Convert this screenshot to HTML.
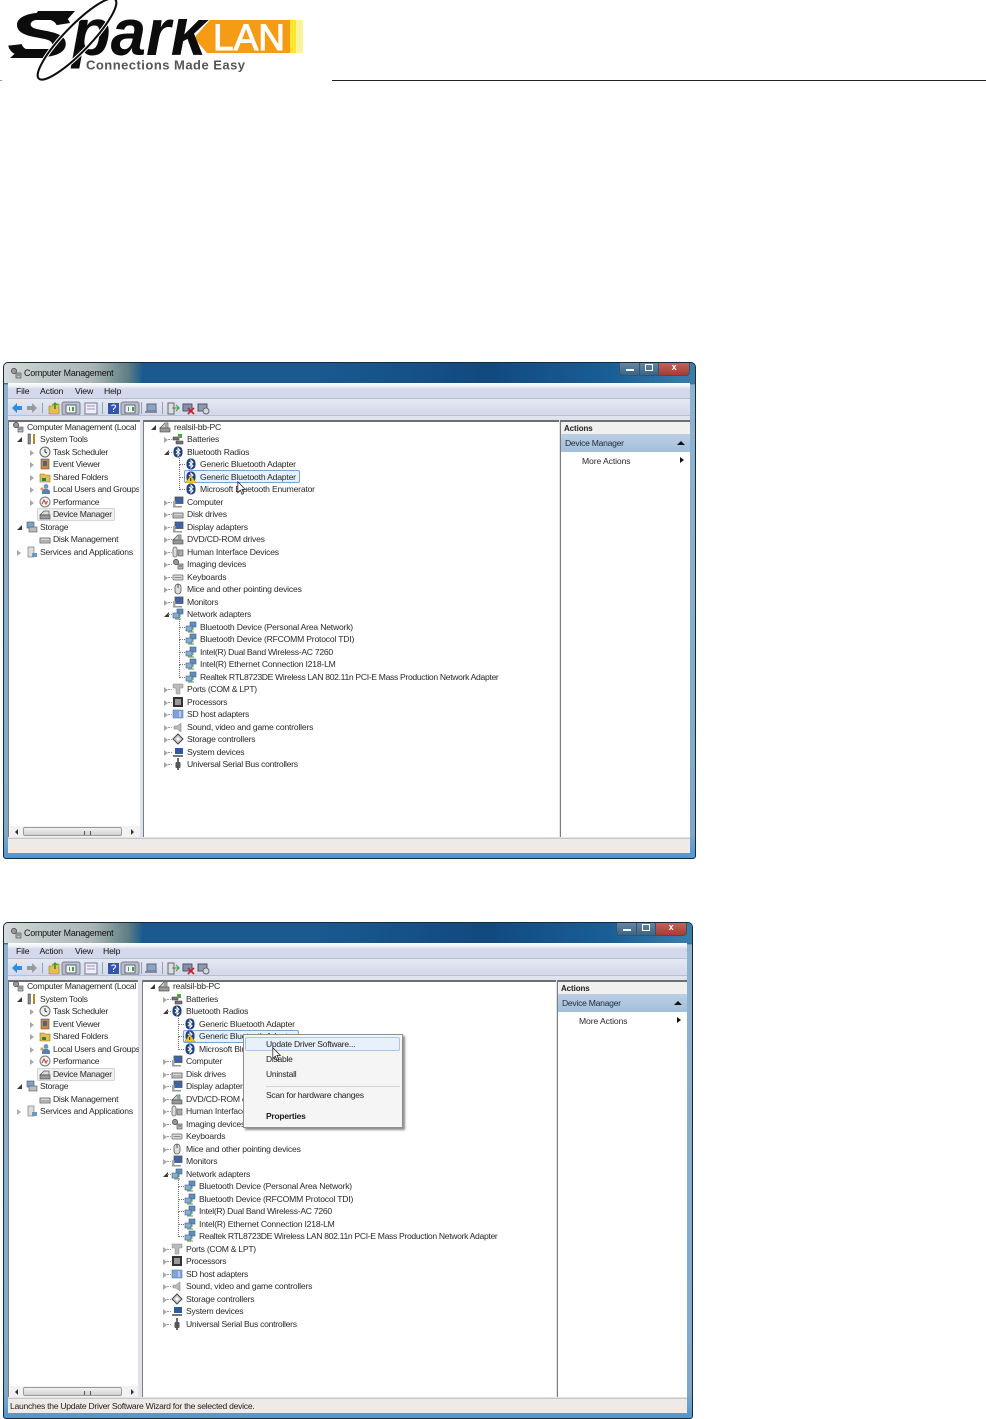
<!DOCTYPE html>
<html><head><meta charset="utf-8">
<style>
html,body{margin:0;padding:0;background:#fff}
body{width:986px;height:1419px;position:relative;overflow:hidden;font-family:"Liberation Sans",sans-serif}
.win{position:absolute;left:3px;height:497px;border:1px solid #1b2a38;box-sizing:border-box;border-radius:5px 5px 3px 3px;background:linear-gradient(180deg,#16568c 0,#1a5a90 20px,#8fb3cf 22px,#7fa8c8 470px,#4f97cf 100%);font-size:8.6px;letter-spacing:-.2px;color:#2a2a2a;overflow:hidden}
.blur{position:absolute;left:-1px;top:-1px;right:-1px;bottom:-1px;filter:blur(.3px)}
.tb{position:absolute;left:0;top:0;right:0;height:21px;background:linear-gradient(90deg,#d8dde0 0,#c8d0d0 20px,#aab6b6 90px,#5f7f85 125px,#1a5a90 140px,#1a5a90 45%,#12497f 70%,#1a5f96 88%,#3c7ea9 100%)}
.tt{position:absolute;left:21px;top:5px;font-size:8.9px;letter-spacing:-.2px;color:#111;line-height:12px}
.bts{position:absolute;top:-1px;height:14px;display:flex;border:1px solid #37526c;border-top:0;border-radius:0 0 4px 4px;overflow:hidden}
.bts i{display:block;height:14px;position:relative;box-sizing:border-box}
.menu{position:absolute;left:5px;top:21px;height:15px;background:linear-gradient(180deg,#fff 0,#eef1f8 20%,#d3d9ea 40%,#d3d9ea 100%);border-bottom:1px solid #b6bdd0}
.menu span{position:absolute;top:3px;line-height:11px;font-size:8.7px;letter-spacing:-.15px;color:#111}
.tool{position:absolute;left:5px;top:37px;height:16px;background:linear-gradient(180deg,#e4e8f3,#d3d9ea);border-bottom:1px solid #b9c0d2}
.mid{position:absolute;left:5px;top:54px;background:#dfe3ee;height:422px}
.pane{position:absolute;top:4px;background:#fff;border-top:2px solid #6f6f6f;border-left:1px solid #7b7b7b;box-sizing:border-box;bottom:1px}
.st{position:absolute;left:5px;top:476px;height:15px;background:#eeeae8;border-top:1px solid #c9c6c4;box-sizing:border-box;font-size:8.6px;letter-spacing:-.28px;line-height:15px;color:#222;padding-left:2px}
.tree{position:absolute;white-space:nowrap}
.r{position:relative;height:12.5px;line-height:12.5px}
.r svg{position:absolute;width:12px;height:12px;top:0}
.t0{padding-left:24px}.t0 svg{left:9px}.t0 b{left:1px}
.t1{padding-left:37px}.t1 svg{left:22px}.t1 b{left:14px}
.t2{padding-left:50px}.t2 svg{left:35px}.t2 b{left:27px}
.o,.e{position:absolute;top:4px;width:0;height:0}
.o{border-left:4px solid #a8a8a8;border-top:3px solid transparent;border-bottom:3px solid transparent}
.e{border-right:5px solid #3a3a3a;border-top:5px solid transparent;margin-top:0}
.d::before{content:"";position:absolute;left:29px;top:-6px;height:12px;width:5px;border-left:1px dotted #777;border-bottom:1px dotted #777}
.s1::after{content:"";position:absolute;left:18px;top:6px;width:4px;border-top:1px dotted #999}
.sel{position:absolute;box-sizing:border-box;height:13px;border-radius:2px}
.act{position:absolute;left:0;right:0;top:0;height:12px;background:#f0f0f0;font-weight:bold;font-size:8px;letter-spacing:-.1px;line-height:13px;padding-left:3px;color:#222}
.dm{position:absolute;left:0;right:0;top:12px;height:18px;background:linear-gradient(180deg,#b9cfe4,#a3bfdb);line-height:19px;padding-left:4px;letter-spacing:-.28px;color:#1d2b3a}
.ma{position:absolute;left:21px;top:33px;line-height:12px;letter-spacing:-.1px}
.sb{position:absolute;height:11px;background:#f2f2f2}
.sb i{position:absolute;left:13px;top:1px;height:9px;width:99px;background:linear-gradient(180deg,#f2f2f2,#cfd0d0);border:1px solid #9a9a9a;border-radius:2px;box-sizing:border-box}
.sb u{position:absolute;top:3px;width:0;height:0;border-top:3px solid transparent;border-bottom:3px solid transparent}
.sb em{position:absolute;left:60px;top:3px;width:5px;height:4px;border-left:1px solid #555;border-right:1px solid #555}
.ctx{position:absolute;left:240px;top:112px;width:160px;height:94px;background:#f5f5f5;border:1px solid #8f8f8f;box-sizing:border-box;box-shadow:2px 2px 2px rgba(0,0,0,.45);font-size:8.5px;letter-spacing:-.25px;color:#222}
.ctx span{position:absolute;left:22px;line-height:12px;white-space:nowrap}
.rt{letter-spacing:-.33px}
.nr{letter-spacing:-.27px}
</style></head><body>

<svg width="0" height="0" style="position:absolute">
<defs>
<symbol id="bt" viewBox="0 0 12 12"><rect x="1.5" y=".5" width="9" height="11" rx="4.2" fill="#1d3f78"/><path d="M3.8 3.8L8 7.8 6 9.8V2.2L8 4.2 3.8 8.2" fill="none" stroke="#fff" stroke-width="1"/></symbol>
<symbol id="bw" viewBox="0 0 12 12"><rect x="1.5" y=".5" width="9" height="11" rx="4.2" fill="#1d3f78"/><path d="M3.8 3.8L8 7.8 6 9.8V2.2L8 4.2 3.8 8.2" fill="none" stroke="#fff" stroke-width="1"/><path d="M5.500 4.500L11.500 12H.5z" fill="#f5c829" stroke="#8a6a10" stroke-width=".4"/><rect x="5.200" y="7" width="1" height="3" fill="#222"/></symbol>
<symbol id="net" viewBox="0 0 12 12"><rect x="5" y="1" width="6" height="5" fill="#5f8fc0" stroke="#44617f" stroke-width=".6"/><rect x="1" y="5" width="6" height="5" fill="#86aed2" stroke="#44617f" stroke-width=".6"/><path d="M3 11H9M8 6V9" stroke="#5a9a50"/></symbol>
<symbol id="mon" viewBox="0 0 12 12"><rect x="3" y="1" width="8" height="6.5" fill="#3f62a8" stroke="#555" stroke-width=".8"/><path d="M1 10h9v1.500H1z" fill="#999"/><rect x="1" y="5" width="2.500" height="5" fill="#aaa"/></symbol>
<symbol id="disk" viewBox="0 0 12 12"><path d="M1 5h10v5H1z" fill="#d8d8d8" stroke="#555" stroke-width=".8"/><path d="M2 8h8" stroke="#888"/></symbol>
<symbol id="srv" viewBox="0 0 12 12"><path d="M1 7L6 2h3v5H1z" fill="#ccc" stroke="#555" stroke-width=".7"/><rect x="1" y="7" width="10" height="4" fill="#999" stroke="#444" stroke-width=".6"/><path d="M7 3v3" stroke="#3f8f50"/></symbol>
<symbol id="gear" viewBox="0 0 12 12"><circle cx="4" cy="4" r="2.6" fill="#999" stroke="#444" stroke-width=".7"/><rect x="6" y="6" width="5" height="5" fill="#bbb" stroke="#444" stroke-width=".6"/><path d="M7 8h3" stroke="#3a6fb0"/></symbol>
<symbol id="bat" viewBox="0 0 12 12"><path d="M1 4h6v3H1zM4 8h7v3H4z" fill="#777" stroke="#333" stroke-width=".5"/><path d="M6 1h4v4H6z" fill="#54a34a"/></symbol>
<symbol id="tool" viewBox="0 0 12 12"><rect x="2" y="1" width="2.500" height="10" fill="#888" stroke="#444" stroke-width=".5"/><path d="M8 1v10" stroke="#b28a2a" stroke-width="2"/></symbol>
<symbol id="clk" viewBox="0 0 12 12"><circle cx="6" cy="6" r="5" fill="#eee" stroke="#666"/><path d="M6 3v3l2 1" stroke="#333" fill="none"/></symbol>
<symbol id="ev" viewBox="0 0 12 12"><rect x="2" y="1" width="8" height="10" fill="#c98b3a" stroke="#555" stroke-width=".6"/><rect x="4" y="3" width="4" height="5" fill="#3f62a8"/></symbol>
<symbol id="fold" viewBox="0 0 12 12"><path d="M1 3h4l1 1h5v7H1z" fill="#e2bf50" stroke="#8a6f1a" stroke-width=".6"/><path d="M3 7h4v3H3z" fill="#3a7a3a"/></symbol>
<symbol id="usr" viewBox="0 0 12 12"><circle cx="7" cy="3.500" r="2.400" fill="#6f95c4"/><path d="M3 11V8l2-2h4l2 2v3z" fill="#5a7fb0"/><circle cx="3" cy="6" r="1.600" fill="#c9a24a"/></symbol>
<symbol id="perf" viewBox="0 0 12 12"><circle cx="6" cy="6" r="5" fill="#f4f4f4" stroke="#777"/><path d="M3 8L5 4l2 4 1.500-3" fill="none" stroke="#c0392b"/></symbol>
<symbol id="dev" viewBox="0 0 12 12"><path d="M1 7L5 3h5v4z" fill="#ddd" stroke="#555" stroke-width=".7"/><rect x="1" y="7" width="10" height="4" fill="#999" stroke="#444" stroke-width=".6"/></symbol>
<symbol id="sto" viewBox="0 0 12 12"><rect x="1" y="1" width="7" height="6" fill="#7fa0c8" stroke="#456" stroke-width=".6"/><rect x="3" y="6" width="8" height="5" fill="#bbb" stroke="#555" stroke-width=".6"/></symbol>
<symbol id="svc" viewBox="0 0 12 12"><rect x="2" y="1" width="6" height="10" fill="#ddd" stroke="#667" stroke-width=".6"/><rect x="6" y="7" width="5" height="4" fill="#6f95c4"/></symbol>
<symbol id="hid" viewBox="0 0 12 12"><rect x="1" y="1" width="4" height="10" rx="2" fill="#ddd" stroke="#555" stroke-width=".7"/><rect x="6" y="4" width="5" height="6" fill="#aaa" stroke="#555" stroke-width=".6"/></symbol>
<symbol id="kb" viewBox="0 0 12 12"><rect x="1" y="4" width="10" height="5" rx="1" fill="#ddd" stroke="#666" stroke-width=".7"/><path d="M2.500 6.500h7" stroke="#888"/></symbol>
<symbol id="ms" viewBox="0 0 12 12"><rect x="3" y="1" width="6" height="10" rx="3" fill="#ddd" stroke="#555" stroke-width=".8"/><path d="M6 1v4" stroke="#555"/></symbol>
<symbol id="prt" viewBox="0 0 12 12"><path d="M1 1h10v4H8v6H4V5H1z" fill="#bbb" stroke="#888" stroke-width=".5"/></symbol>
<symbol id="cpu" viewBox="0 0 12 12"><rect x="1" y="1" width="10" height="10" fill="#333"/><rect x="3" y="3" width="6" height="6" fill="#999"/></symbol>
<symbol id="sd" viewBox="0 0 12 12"><rect x="1" y="2" width="10" height="8" fill="#7fa3d6" stroke="#5a7fb0" stroke-width=".6"/><path d="M8 3v6" stroke="#eef"/></symbol>
<symbol id="snd" viewBox="0 0 12 12"><path d="M2 5h3l4-3v9L5 8H2z" fill="#bbb" stroke="#777" stroke-width=".5"/></symbol>
<symbol id="stc" viewBox="0 0 12 12"><path d="M6 1l5 5-5 5-5-5z" fill="#ccc" stroke="#444"/><circle cx="6" cy="6" r="1.500" fill="#fff"/></symbol>
<symbol id="sys" viewBox="0 0 12 12"><rect x="3" y="2" width="8" height="6" fill="#2f5aa8"/><path d="M1 10h10" stroke="#777" stroke-width="2"/></symbol>
<symbol id="usb" viewBox="0 0 12 12"><rect x="3.500" y="4" width="5" height="6" rx="1" fill="#555"/><path d="M6 0v4M6 10v2" stroke="#444" stroke-width="1.600"/></symbol>
<symbol id="cur" viewBox="0 0 12 18"><path d="M1 1v13l3-3 2 5 2-1-2-5h4z" fill="#fff" stroke="#222" stroke-width=".9"/></symbol>
<symbol id="tbar" viewBox="0 0 215 14">
<path d="M13 7l5-5v3h5v4H18v3z" fill="#2f8fd6"/><path d="M28 5h5V2l5 5-5 5V9h-5z" fill="#9a9a9a"/><rect x="43" y="2" width="1" height="10" fill="#98a0b0"/>
<path d="M50 5h3l1-2h6v10H50z" fill="#e6c04a" stroke="#9c7c1e" stroke-width=".6"/><path d="M56 1l3 3h-2v4h-2V4h-2z" fill="#4a9a3a"/>
<rect x="63" y="1" width="18" height="13" rx="2" fill="#b7bcc9" stroke="#79808f"/><rect x="67" y="4" width="10" height="8" fill="#eef" stroke="#667"/><path d="M70 6h1v4h-1zM73 6h2v4h-2z" fill="#4a9a3a"/>
<rect x="86" y="2" width="12" height="11" fill="#eef" stroke="#778"/><path d="M88 5h8M88 8h8" stroke="#99a"/><rect x="103" y="1" width="1" height="12" fill="#98a0b0"/>
<rect x="109" y="2" width="11" height="11" fill="#3556a8"/><path d="M112.500 5c1-2 5-1 4 1l-2 2v1M114.500 10v1" stroke="#fff" fill="none"/>
<rect x="122" y="1" width="18" height="13" rx="2" fill="#b7bcc9" stroke="#79808f"/><rect x="126" y="4" width="10" height="8" fill="#eef" stroke="#667"/><path d="M129 6h1v4h-1zM133 6h2v4h-2z" fill="#4a9a3a"/><rect x="142" y="1" width="1" height="12" fill="#98a0b0"/>
<rect x="148" y="3" width="9" height="7" fill="#86a3c8" stroke="#667"/><path d="M146 11h12" stroke="#889" stroke-width="2"/><rect x="163" y="1" width="1" height="12" fill="#98a0b0"/>
<rect x="169" y="2" width="6" height="11" fill="#ddd" stroke="#667"/><path d="M173 7h7M177 4l3 3-3 3" stroke="#3a9a3a" fill="none"/>
<rect x="184" y="3" width="9" height="7" fill="#7f93b0" stroke="#556"/><path d="M189 7l6 6M195 7l-6 6" stroke="#d0202a" stroke-width="1.600"/>
<rect x="199" y="3" width="9" height="7" fill="#8d9aac" stroke="#556"/><circle cx="207" cy="10" r="3" fill="#d8d8d8" stroke="#667"/>
</symbol>
</defs>
</svg>

<!-- logo -->
<svg style="position:absolute;left:0;top:0" width="320" height="82" viewBox="0 0 320 82">
<defs><clipPath id="kc"><rect x="60" y="19" width="160" height="60"/></clipPath></defs>
<polygon points="210,20 290,20 290,53 207,53 194,38" fill="#f59b14"/>
<rect x="290" y="20" width="6" height="33" fill="#fde62f"/>
<rect x="296" y="20" width="7" height="33" fill="#f9f49c"/>
<text x="213" y="50" font-size="37" textLength="72" lengthAdjust="spacingAndGlyphs" fill="#fff" stroke="#fff" stroke-width="1" font-family="Liberation Sans">LAN</text>
<text transform="translate(7,57) scale(1.5,.98)" font-size="64" font-weight="bold" font-style="italic" fill="#0c0c0c" font-family="Liberation Sans">S</text>
<polygon points="38,11 75,11 67,20 32,20" fill="#0c0c0c"/>
<polygon points="10,58 46,58 53,49 20,49" fill="#0c0c0c"/>
<g clip-path="url(#kc)"><text x="72" y="55" font-size="66" font-weight="bold" font-style="italic" fill="#0c0c0c" textLength="134" lengthAdjust="spacingAndGlyphs" font-family="Liberation Sans">park</text></g>
<ellipse cx="77" cy="39" rx="55" ry="13" transform="rotate(-46 77 39)" fill="none" stroke="#fff" stroke-width="4"/>
<ellipse cx="77" cy="39" rx="55" ry="13" transform="rotate(-46 77 39)" fill="none" stroke="#0c0c0c" stroke-width="2"/>
<text x="86" y="69.500" font-size="13" font-weight="bold" fill="#555" textLength="159" font-family="Liberation Sans">Connections Made Easy</text>
</svg>
<div style="position:absolute;left:332px;top:80px;width:654px;height:1px;background:#222"></div>
<div style="position:absolute;left:0;top:80px;width:2px;height:1px;background:#999"></div>

<!-- WINDOW 1 -->
<div class="win" style="top:362px;width:693px">
<div class="blur">
<div class="tb"></div>
<svg style="position:absolute;left:7px;top:5px;width:12px;height:12px"><use href="#gear"/></svg>
<div class="tt">Computer Management</div>
<div class="bts" style="left:616px">
<i style="width:19px;background:linear-gradient(#6d8ca8,#3d6484)"><s style="position:absolute;left:6px;top:8px;width:8px;height:2px;background:#fff"></s></i>
<i style="width:19px;background:linear-gradient(#6d8ca8,#3d6484);border-left:1px solid #37526c"><s style="position:absolute;left:5px;top:3px;width:8px;height:7px;border:1px solid #fff;box-sizing:border-box"></s></i>
<i style="width:31px;background:linear-gradient(#c9695e,#a63d33);border-left:1px solid #37526c;color:#fff;font:bold 9px/13px 'Liberation Sans';text-align:center">x</i>
</div>
<div class="menu" style="width:682px"><span style="left:8px">File</span><span style="left:32px">Action</span><span style="left:67px">View</span><span style="left:96px">Help</span></div>
<div class="tool" style="width:682px"><svg style="position:absolute;left:-9px;top:2px" width="215" height="14"><use href="#tbar"/></svg></div>
<div class="mid" style="width:682px">
<div class="pane" style="left:0;width:132px"></div>
<div class="pane" style="left:135px;width:416px"></div>
<div class="pane" style="left:552px;width:130px">
<div class="act">Actions</div>
<div class="dm">Device Manager<s style="position:absolute;right:5px;top:7px;width:0;height:0;border-left:4px solid transparent;border-right:4px solid transparent;border-bottom:4px solid #111"></s></div>
<div class="ma">More Actions</div>
<s style="position:absolute;left:119px;top:35px;width:0;height:0;border-left:4px solid #111;border-top:3px solid transparent;border-bottom:3px solid transparent"></s>
</div>
</div>
<div class="sel" style="left:34px;top:146px;width:78px;background:#f0f0f0;border:1px solid #d4d4d4"></div>
<div class="sel" style="left:181px;top:108px;width:116px;background:#e6f1fb;border:1px solid #7da2ce"></div>

<!-- left tree -->
<div class="tree nr" style="left:0;top:58.500px;width:136px;overflow:hidden">
<div class="r t0"><svg><use href="#gear"/></svg>Computer Management (Local</div>
<div class="r t1"><b class="e"></b><svg style="left:23px"><use href="#tool"/></svg>System Tools</div>
<div class="r t2"><b class="o"></b><svg style="left:36px"><use href="#clk"/></svg>Task Scheduler</div>
<div class="r t2"><b class="o"></b><svg style="left:36px"><use href="#ev"/></svg>Event Viewer</div>
<div class="r t2"><b class="o"></b><svg style="left:36px"><use href="#fold"/></svg>Shared Folders</div>
<div class="r t2"><b class="o"></b><svg style="left:36px"><use href="#usr"/></svg>Local Users and Groups</div>
<div class="r t2"><b class="o"></b><svg style="left:36px"><use href="#perf"/></svg>Performance</div>
<div class="r t2"><svg style="left:36px"><use href="#dev"/></svg>Device Manager</div>
<div class="r t1"><b class="e"></b><svg style="left:23px"><use href="#sto"/></svg>Storage</div>
<div class="r t2"><svg style="left:36px"><use href="#disk"/></svg>Disk Management</div>
<div class="r t1" style="letter-spacing:-.2px"><b class="o"></b><svg style="left:23px"><use href="#svc"/></svg>Services and Applications</div>
</div>

<!-- right tree -->
<div class="tree" style="left:147px;top:58.500px">
<div class="r t0"><b class="e"></b><svg><use href="#srv"/></svg>realsil-bb-PC</div>
<div class="r t1 s1"><b class="o"></b><svg><use href="#bat"/></svg>Batteries</div>
<div class="r t1 s1"><b class="e"></b><svg><use href="#bt"/></svg>Bluetooth Radios</div>
<div class="r t2 d"><svg><use href="#bt"/></svg>Generic Bluetooth Adapter</div>
<div class="r t2 d"><svg><use href="#bw"/></svg>Generic Bluetooth Adapter</div>
<div class="r t2 d"><svg><use href="#bt"/></svg>Microsoft Bluetooth Enumerator</div>
<div class="r t1 s1"><b class="o"></b><svg><use href="#mon"/></svg>Computer</div>
<div class="r t1 s1"><b class="o"></b><svg><use href="#disk"/></svg>Disk drives</div>
<div class="r t1 s1"><b class="o"></b><svg><use href="#mon"/></svg>Display adapters</div>
<div class="r t1 s1"><b class="o"></b><svg><use href="#srv"/></svg>DVD/CD-ROM drives</div>
<div class="r t1 s1"><b class="o"></b><svg><use href="#hid"/></svg>Human Interface Devices</div>
<div class="r t1 s1"><b class="o"></b><svg><use href="#gear"/></svg>Imaging devices</div>
<div class="r t1 s1"><b class="o"></b><svg><use href="#kb"/></svg>Keyboards</div>
<div class="r t1 s1"><b class="o"></b><svg><use href="#ms"/></svg>Mice and other pointing devices</div>
<div class="r t1 s1"><b class="o"></b><svg><use href="#mon"/></svg>Monitors</div>
<div class="r t1 s1"><b class="e"></b><svg><use href="#net"/></svg>Network adapters</div>
<div class="r t2 d"><svg><use href="#net"/></svg>Bluetooth Device (Personal Area Network)</div>
<div class="r t2 d"><svg><use href="#net"/></svg>Bluetooth Device (RFCOMM Protocol TDI)</div>
<div class="r t2 d nr"><svg><use href="#net"/></svg>Intel(R) Dual Band Wireless-AC 7260</div>
<div class="r t2 d"><svg><use href="#net"/></svg>Intel(R) Ethernet Connection I218-LM</div>
<div class="r t2 d rt"><svg><use href="#net"/></svg>Realtek RTL8723DE Wireless LAN 802.11n PCI-E Mass Production Network Adapter</div>
<div class="r t1 s1 nr"><b class="o"></b><svg><use href="#prt"/></svg>Ports (COM &amp; LPT)</div>
<div class="r t1 s1 nr"><b class="o"></b><svg><use href="#cpu"/></svg>Processors</div>
<div class="r t1 s1 nr"><b class="o"></b><svg><use href="#sd"/></svg>SD host adapters</div>
<div class="r t1 s1"><b class="o"></b><svg><use href="#snd"/></svg>Sound, video and game controllers</div>
<div class="r t1 s1"><b class="o"></b><svg><use href="#stc"/></svg>Storage controllers</div>
<div class="r t1 s1"><b class="o"></b><svg><use href="#sys"/></svg>System devices</div>
<div class="r t1 s1 nr"><b class="o"></b><svg><use href="#usb"/></svg>Universal Serial Bus controllers</div>
</div>
<svg style="position:absolute;left:234px;top:119px" width="10" height="15" viewBox="0 0 12 18"><use href="#cur"/></svg>
<div class="sb" style="left:7px;width:130px;top:464px"><u style="left:5px;border-right:3px solid #333"></u><i><em></em></i><u style="left:121px;border-left:3px solid #333"></u></div>
<div class="st" style="width:682px"></div>
</div>
</div>

<!-- WINDOW 2 -->
<div class="win" style="top:922px;width:690px">
<div class="blur">
<div class="tb"></div>
<svg style="position:absolute;left:7px;top:5px;width:12px;height:12px"><use href="#gear"/></svg>
<div class="tt">Computer Management</div>
<div class="bts" style="left:613px">
<i style="width:19px;background:linear-gradient(#6d8ca8,#3d6484)"><s style="position:absolute;left:6px;top:8px;width:8px;height:2px;background:#fff"></s></i>
<i style="width:19px;background:linear-gradient(#6d8ca8,#3d6484);border-left:1px solid #37526c"><s style="position:absolute;left:5px;top:3px;width:8px;height:7px;border:1px solid #fff;box-sizing:border-box"></s></i>
<i style="width:31px;background:linear-gradient(#c9695e,#a63d33);border-left:1px solid #37526c;color:#fff;font:bold 9px/13px 'Liberation Sans';text-align:center">x</i>
</div>
<div class="menu" style="width:679px"><span style="left:8px">File</span><span style="left:31.500px">Action</span><span style="left:67px">View</span><span style="left:95px">Help</span></div>
<div class="tool" style="width:679px"><svg style="position:absolute;left:-9px;top:2px" width="215" height="14"><use href="#tbar"/></svg></div>
<div class="mid" style="width:679px">
<div class="pane" style="left:0;width:130px"></div>
<div class="pane" style="left:134px;width:414px"></div>
<div class="pane" style="left:549px;width:130px">
<div class="act">Actions</div>
<div class="dm">Device Manager<s style="position:absolute;right:5px;top:7px;width:0;height:0;border-left:4px solid transparent;border-right:4px solid transparent;border-bottom:4px solid #111"></s></div>
<div class="ma">More Actions</div>
<s style="position:absolute;left:119px;top:35px;width:0;height:0;border-left:4px solid #111;border-top:3px solid transparent;border-bottom:3px solid transparent"></s>
</div>
</div>
<div class="sel" style="left:34px;top:146px;width:78px;background:#f0f0f0;border:1px solid #d4d4d4"></div>
<div class="sel" style="left:180px;top:108px;width:116px;background:#e6f1fb;border:1px solid #7da2ce"></div>

<div class="tree nr" style="left:0;top:58px;width:136px;overflow:hidden">
<div class="r t0"><svg><use href="#gear"/></svg>Computer Management (Local</div>
<div class="r t1"><b class="e"></b><svg style="left:23px"><use href="#tool"/></svg>System Tools</div>
<div class="r t2"><b class="o"></b><svg style="left:36px"><use href="#clk"/></svg>Task Scheduler</div>
<div class="r t2"><b class="o"></b><svg style="left:36px"><use href="#ev"/></svg>Event Viewer</div>
<div class="r t2"><b class="o"></b><svg style="left:36px"><use href="#fold"/></svg>Shared Folders</div>
<div class="r t2"><b class="o"></b><svg style="left:36px"><use href="#usr"/></svg>Local Users and Groups</div>
<div class="r t2"><b class="o"></b><svg style="left:36px"><use href="#perf"/></svg>Performance</div>
<div class="r t2"><svg style="left:36px"><use href="#dev"/></svg>Device Manager</div>
<div class="r t1"><b class="e"></b><svg style="left:23px"><use href="#sto"/></svg>Storage</div>
<div class="r t2"><svg style="left:36px"><use href="#disk"/></svg>Disk Management</div>
<div class="r t1" style="letter-spacing:-.2px"><b class="o"></b><svg style="left:23px"><use href="#svc"/></svg>Services and Applications</div>
</div>

<div class="tree" style="left:146px;top:58px">
<div class="r t0"><b class="e"></b><svg><use href="#srv"/></svg>realsil-bb-PC</div>
<div class="r t1 s1"><b class="o"></b><svg><use href="#bat"/></svg>Batteries</div>
<div class="r t1 s1"><b class="e"></b><svg><use href="#bt"/></svg>Bluetooth Radios</div>
<div class="r t2 d"><svg><use href="#bt"/></svg>Generic Bluetooth Adapter</div>
<div class="r t2 d"><svg><use href="#bw"/></svg>Generic Bluetooth Adapter</div>
<div class="r t2 d"><svg><use href="#bt"/></svg>Microsoft Bluetooth Enumerator</div>
<div class="r t1 s1"><b class="o"></b><svg><use href="#mon"/></svg>Computer</div>
<div class="r t1 s1"><b class="o"></b><svg><use href="#disk"/></svg>Disk drives</div>
<div class="r t1 s1"><b class="o"></b><svg><use href="#mon"/></svg>Display adapters</div>
<div class="r t1 s1"><b class="o"></b><svg><use href="#srv"/></svg>DVD/CD-ROM drives</div>
<div class="r t1 s1"><b class="o"></b><svg><use href="#hid"/></svg>Human Interface Devices</div>
<div class="r t1 s1"><b class="o"></b><svg><use href="#gear"/></svg>Imaging devices</div>
<div class="r t1 s1"><b class="o"></b><svg><use href="#kb"/></svg>Keyboards</div>
<div class="r t1 s1"><b class="o"></b><svg><use href="#ms"/></svg>Mice and other pointing devices</div>
<div class="r t1 s1"><b class="o"></b><svg><use href="#mon"/></svg>Monitors</div>
<div class="r t1 s1"><b class="e"></b><svg><use href="#net"/></svg>Network adapters</div>
<div class="r t2 d"><svg><use href="#net"/></svg>Bluetooth Device (Personal Area Network)</div>
<div class="r t2 d"><svg><use href="#net"/></svg>Bluetooth Device (RFCOMM Protocol TDI)</div>
<div class="r t2 d nr"><svg><use href="#net"/></svg>Intel(R) Dual Band Wireless-AC 7260</div>
<div class="r t2 d"><svg><use href="#net"/></svg>Intel(R) Ethernet Connection I218-LM</div>
<div class="r t2 d rt"><svg><use href="#net"/></svg>Realtek RTL8723DE Wireless LAN 802.11n PCI-E Mass Production Network Adapter</div>
<div class="r t1 s1 nr"><b class="o"></b><svg><use href="#prt"/></svg>Ports (COM &amp; LPT)</div>
<div class="r t1 s1 nr"><b class="o"></b><svg><use href="#cpu"/></svg>Processors</div>
<div class="r t1 s1 nr"><b class="o"></b><svg><use href="#sd"/></svg>SD host adapters</div>
<div class="r t1 s1"><b class="o"></b><svg><use href="#snd"/></svg>Sound, video and game controllers</div>
<div class="r t1 s1"><b class="o"></b><svg><use href="#stc"/></svg>Storage controllers</div>
<div class="r t1 s1"><b class="o"></b><svg><use href="#sys"/></svg>System devices</div>
<div class="r t1 s1 nr"><b class="o"></b><svg><use href="#usb"/></svg>Universal Serial Bus controllers</div>
</div>

<div class="ctx">
<div style="position:absolute;left:1px;top:2px;width:155px;height:14px;background:#e8f1fa;border:1px solid #a9c6e4;box-sizing:border-box;border-radius:2px"></div>
<span style="top:3px">Update Driver Software...</span>
<span style="top:18px">Disable</span>
<span style="top:33px">Uninstall</span>
<div style="position:absolute;left:22px;right:2px;top:51px;height:1px;background:#d4d4d4"></div>
<span style="top:54px">Scan for hardware changes</span>
<span style="top:75px;font-weight:bold">Properties</span>
</div>
<svg style="position:absolute;left:269px;top:125px" width="10" height="15" viewBox="0 0 12 18"><use href="#cur"/></svg>
<div class="sb" style="left:7px;width:128px;top:464px"><u style="left:5px;border-right:3px solid #333"></u><i><em></em></i><u style="left:121px;border-left:3px solid #333"></u></div>
<div class="st" style="width:679px">Launches the Update Driver Software Wizard for the selected device.</div>
</div>
</div>

</body></html>
